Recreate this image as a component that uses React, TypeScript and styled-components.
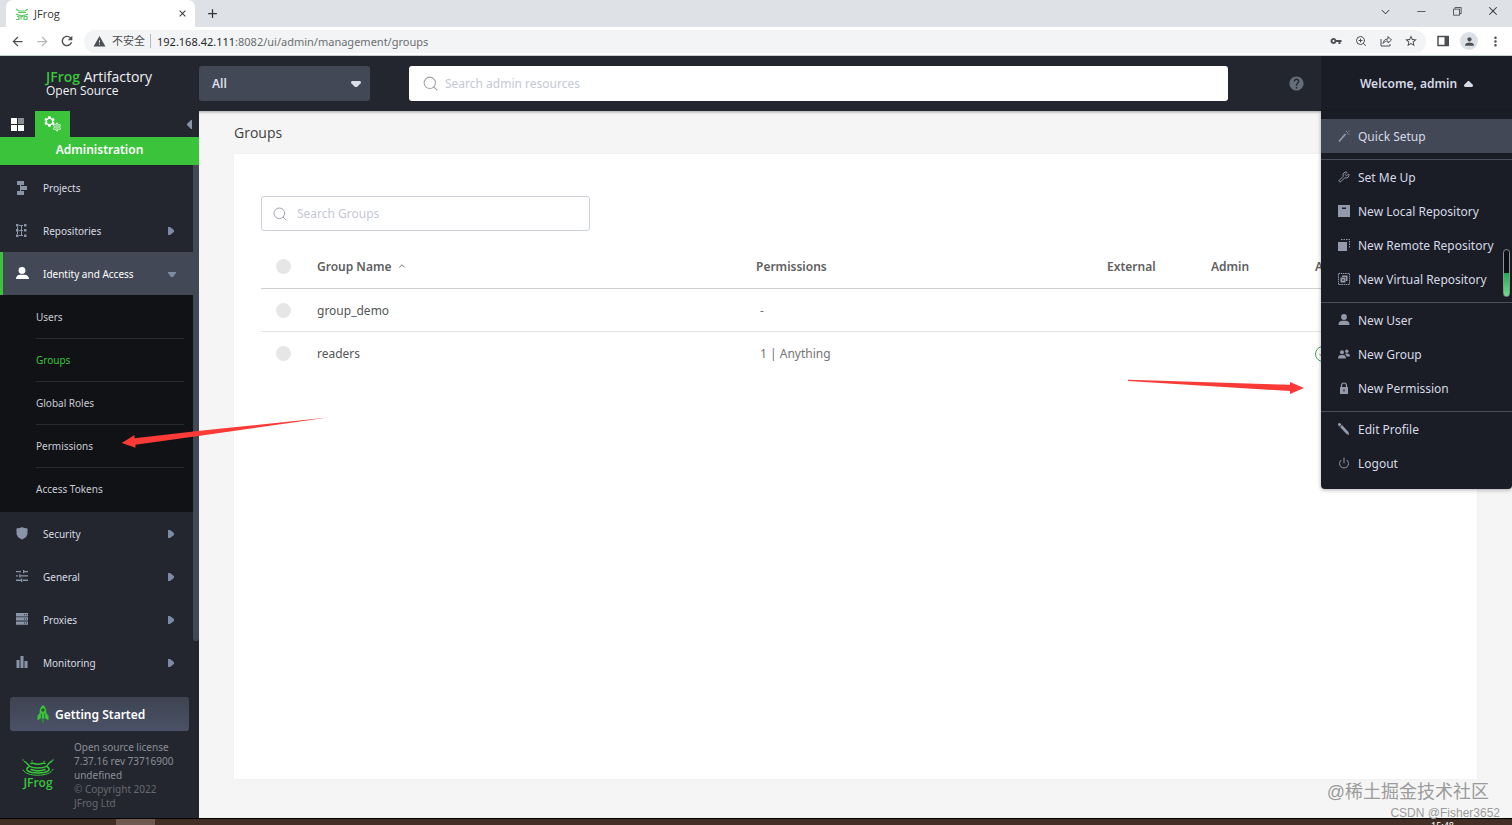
import React from 'react';
import styled, { createGlobalStyle } from 'styled-components';
import {
  MdArrowBack,
  MdArrowForward,
  MdRefresh,
  MdWarning,
  MdVpnKey,
  MdStarBorder,
  MdPerson,
  MdMoreVert,
  MdClose,
  MdAdd,
  MdSettings,
  MdOutlineSettings,
  MdHelp,
} from 'react-icons/md';
import { VscChromeMinimize, VscChromeRestore, VscChromeClose, VscChevronDown } from 'react-icons/vsc';
import { Wrench, Power, Search, ChevronUp, ZoomIn } from 'lucide-react';

const sans = '"Noto Sans", "Open Sans", "Noto Sans CJK SC", sans-serif';
const openSans = '"Open Sans", "Noto Sans", sans-serif';
const green = '#3cc33c';
const slate = '#424855';
const dark = '#23262f';
const darker = '#1a1d26';
const iconTint = '#8a94a8';

const GlobalStyle = createGlobalStyle`
  *, *::before, *::after { box-sizing: border-box; }
  body { margin: 0; font-family: ${sans}; font-size: 12px; color: #4c4c4c; }
  button, input, select { font: inherit; color: inherit; }
  button { border: 0; padding: 0; background: none; cursor: pointer; }
  a { color: inherit; text-decoration: none; }
  ul { list-style: none; margin: 0; padding: 0; }
  svg { display: block; flex: none; }
`;

const Page = styled.div`
  position: relative;
  display: flex;
  flex-direction: column;
  min-height: 100vh;
  overflow: hidden;
`;

/* Browser frame */
const TabStrip = styled.div`
  display: flex;
  align-items: center;
  height: 27px;
  padding-left: 6px;
  background: #dee1e6;
  color: #333;
`;
const Tab = styled.div`
  display: flex;
  align-items: center;
  gap: 6px;
  width: 189px;
  height: 27px;
  padding: 0 5px 0 10px;
  border-radius: 7px 7px 0 0;
  background: #fff;
  font-size: 11px;
`;
const TabTitle = styled.span`
  flex: 1;
  font-family: ${openSans};
`;
const NewTab = styled.button`
  margin-left: 10px;
`;
const WindowControls = styled.div`
  display: flex;
  align-items: center;
  gap: 20px;
  margin-left: auto;
  padding: 0 11px 5px 0;
`;
const Toolbar = styled.div`
  display: flex;
  align-items: center;
  gap: 9px;
  height: 29px;
  padding: 0 9px;
  border-bottom: 1px solid #d5dcdc;
  background: #fff;
  color: #4c5054;
`;
const IconButton = styled.button<{ $faint?: boolean; $round?: boolean }>`
  display: grid;
  place-items: center;
  width: 16px;
  height: 16px;
  color: ${(p) => (p.$faint ? '#b4b7ba' : 'inherit')};
  ${(p) => p.$round && 'width: 18px; height: 18px; border-radius: 50%; background: #dbdfe6;'}
`;
const AddressBar = styled.div`
  display: flex;
  flex: 1;
  align-items: center;
  gap: 6px;
  height: 23px;
  padding: 0 7px 0 9px;
  border-radius: 12px;
  background: #f3f4f5;
  font-size: 11px;
`;
const Insecure = styled.span`
  padding-right: 5px;
  border-right: 1px solid #b6b9bc;
  line-height: 14px;
`;
const Url = styled.span`
  flex: 1;
  color: #6a6e72;
`;
const UrlHost = styled.span`
  color: #26292c;
`;
const AddressTools = styled.div`
  display: flex;
  gap: 9px;
`;

/* Application header */
const Header = styled.header`
  position: relative;
  z-index: 2;
  display: flex;
  align-items: center;
  height: 55px;
  background: ${dark};
  box-shadow: 0 1px 3px rgba(0, 0, 0, 0.35);
`;
const Brand = styled.div`
  width: 199px;
  padding-left: 46px;
  color: #f0f1f4;
  font-family: ${openSans};
  font-size: 12px;
  line-height: 14px;
`;
const BrandName = styled.div`
  font-size: 14px;
`;
const BrandMark = styled.span`
  color: ${green};
  font-weight: 600;
`;
const ScopePicker = styled.label`
  position: relative;
  width: 171px;
  color: #dcdfe8;
`;
const ScopeSelect = styled.select`
  display: block;
  width: 100%;
  height: 35px;
  padding: 0 13px;
  border: 0;
  border-radius: 3px;
  appearance: none;
  background: ${slate};
  font-size: 12px;
  font-weight: 600;
`;
const ScopeArrow = styled.svg`
  position: absolute;
  top: 15px;
  right: 9px;
`;
const SearchField = styled.label<{ $wide?: boolean }>`
  display: flex;
  align-items: center;
  gap: ${(p) => (p.$wide ? '6px' : '9px')};
  height: 35px;
  border-radius: 3px;
  background: #fff;
  color: #a0a3ad;
  ${(p) =>
    p.$wide
      ? 'flex: 1; margin: 0 60px 0 39px; padding: 0 13px;'
      : 'width: 329px; padding: 0 10px; border: 1px solid #ccd0d7;'}
`;
const SearchInput = styled.input`
  flex: 1;
  min-width: 0;
  padding: 0;
  border: 0;
  outline: 0;
  background: none;
  font-size: 12px;
  color: #4c4c4c;
  &::placeholder { color: #c5c8d4; opacity: 1; }
`;
const HelpButton = styled.button`
  margin-right: 16px;
  color: #666e7b;
`;

/* User menu */
const UserArea = styled.div`
  position: relative;
  width: 191px;
  height: 55px;
  background: ${darker};
  color: #d6d9e6;
`;
const UserButton = styled.button`
  display: flex;
  align-items: center;
  justify-content: center;
  gap: 7px;
  width: 100%;
  height: 55px;
  font-size: 12px;
  font-weight: 600;
`;
const UserMenu = styled.div`
  position: absolute;
  top: 100%;
  right: 0;
  width: 100%;
  padding: 8px 0 3px;
  border-radius: 0 0 4px 4px;
  background: ${darker};
  box-shadow: 0 1px 4px rgba(0, 0, 0, 0.3);
`;
const MenuGroup = styled.ul`
  padding-bottom: 6px;
  & + & { border-top: 1px solid #4a4f5a; }
`;
const MenuLink = styled.a<{ $active?: boolean }>`
  display: flex;
  align-items: center;
  gap: 8px;
  height: 34px;
  padding-left: 17px;
  background: ${(p) => (p.$active ? slate : 'transparent')};
  font-size: 12px;
  white-space: nowrap;
  svg { color: #9299aa; }
`;
const LevelGauge = styled.div`
  position: absolute;
  top: 138px;
  right: 2px;
  width: 7px;
  height: 48px;
  border: 1px solid #8b9098;
  border-radius: 4px;
  background: linear-gradient(#0c0e12 50%, #23a84e 50%, #6ede8b);
`;

/* Sidebar */
const Body = styled.div`
  display: flex;
  flex: 1;
`;
const Sidebar = styled.aside`
  display: flex;
  flex-direction: column;
  width: 199px;
  background: ${dark};
  color: #d8dbe3;
`;
const ModeTabs = styled.div`
  display: flex;
  align-items: center;
  position: relative;
  z-index: 3;
  height: 26px;
  background: ${dark};
`;
const ModeTab = styled.button<{ $active?: boolean }>`
  display: grid;
  place-items: center;
  width: 35px;
  height: 26px;
  background: ${(p) => (p.$active ? green : 'transparent')};
`;
const Collapse = styled.button`
  margin-left: auto;
  padding-right: 6px;
`;
const ModeTitle = styled.h2`
  margin: 0;
  height: 28px;
  background: ${green};
  color: #fff;
  font-size: 12px;
  font-weight: 600;
  line-height: 25px;
  text-align: center;
`;
const NavArea = styled.nav`
  display: flex;
  flex: 1;
`;
const NavList = styled.ul`
  flex: 1;
  padding-top: 1px;
`;
const ScrollTrack = styled.div`
  width: 6px;
`;
const ScrollThumb = styled.div`
  height: 476px;
  border-radius: 0 0 3px 3px;
  background: ${slate};
`;
const NavLink = styled.a<{ $active?: boolean }>`
  display: grid;
  grid-template-columns: 27px 1fr 8px;
  align-items: center;
  height: 43px;
  padding: 0 17px 0 16px;
  font-size: 10px;
  ${(p) =>
    p.$active &&
    `padding-left: 13px; border-left: 3px solid ${green}; background: ${slate}; color: #fff;`}
`;
const SubNav = styled.ul`
  padding: 1px 9px 1px 36px;
  background: #111216;
`;
const SubLink = styled.a<{ $active?: boolean }>`
  display: flex;
  align-items: center;
  height: 43px;
  border-bottom: 1px solid #2a2b2e;
  color: ${(p) => (p.$active ? green : '#c9ccd4')};
  font-size: 10px;
  li:last-child > & { border-color: transparent; }
`;
const GettingStarted = styled.button`
  display: flex;
  align-items: center;
  gap: 5px;
  height: 34px;
  margin: 0 10px 9px;
  padding-left: 26px;
  border-radius: 3px;
  background: linear-gradient(#3d4350, #4b5267);
  color: #fff;
  font-size: 12px;
  font-weight: 600;
`;
const License = styled.footer`
  display: flex;
  gap: 20px;
  padding: 0 0 8px 22px;
  color: #8b8e96;
  font-size: 10px;
  line-height: 14px;
`;
const Logo = styled.div`
  width: 32px;
  padding-top: 19px;
  color: ${green};
  font-family: ${openSans};
  font-size: 12px;
  font-weight: 600;
  line-height: 14px;
  text-align: center;
`;
const Copyright = styled.div`
  color: #666970;
`;

/* Content */
const Content = styled.main`
  display: flex;
  flex: 1;
  flex-direction: column;
  padding: 10px 35px 39px;
  background: #f5f5f5;
`;
const Title = styled.h1`
  margin: 0 0 9px;
  color: #414141;
  font-family: ${openSans};
  font-size: 14px;
  font-weight: 400;
  line-height: 24px;
`;
const Card = styled.section`
  flex: 1;
  padding: 42px 27px 27px;
  background: #fff;
  box-shadow: 0 0 4px rgba(0, 0, 0, 0.03);
`;
const Table = styled.table`
  width: 100%;
  margin-top: 14px;
  border-collapse: collapse;
  table-layout: fixed;
  font-size: 12px;
  text-align: left;
`;
const Col = styled.col<{ $w?: number }>`
  width: ${(p) => (p.$w ? `${p.$w}px` : 'auto')};
`;
const Row = styled.tr`
  height: 43px;
  border-bottom: 1px solid #e2e2e2;
  thead & { border-color: #cfcfcf; }
  &:last-child:not(thead &) { border-color: transparent; }
`;
const Th = styled.th`
  padding: 0;
  color: #606060;
  font-weight: 600;
`;
const Td = styled.td<{ $inset?: boolean }>`
  padding: 2px 0 0 ${(p) => (p.$inset ? '4px' : '0')};
  color: ${(p) => (p.$inset ? '#747474' : '#555')};
`;
const SortButton = styled.button`
  display: flex;
  align-items: center;
  gap: 6px;
`;
const Check = styled.input`
  display: block;
  width: 15px;
  height: 15px;
  margin: 0 0 0 15px;
  border-radius: 50%;
  appearance: none;
  background: #e6e6e6;
`;

/* Overlays */
const Arrows = styled.svg`
  position: absolute;
  top: 370px;
  left: 0;
  z-index: 4;
  pointer-events: none;
`;
const Watermark = styled.div`
  position: absolute;
  right: 12px;
  bottom: 4px;
  z-index: 3;
  display: flex;
  flex-direction: column;
  align-items: flex-end;
  color: #9b9b9b;
  font-family: "Liberation Sans", "Noto Sans CJK SC", sans-serif;
  font-size: 12px;
  line-height: 16px;
`;
const WatermarkTitle = styled.div`
  margin-right: 11px;
  font-size: 18px;
  line-height: 26px;
`;
const Taskbar = styled.div`
  position: relative;
  z-index: 3;
  display: flex;
  justify-content: space-between;
  height: 7px;
  padding: 0 58px 0 116px;
  border-top: 1px solid #000;
  background: #432e26;
  overflow: hidden;
`;
const TaskItem = styled.div`
  width: 39px;
  background: #705950;
`;
const Clock = styled.div`
  padding-top: 1px;
  color: #fff;
  font-size: 9px;
  line-height: 12px;
`;

const glyphs: Record<string, React.ReactNode> = {
  projects: <path d="M1 0h7v4H1zM4 5h7v4H4zM1 10h7v4H1zM4 4h1v1H4zM4 9h1v1H4z" />,
  repositories: (
    <path d="M0 0h2.500v2.500H0zM0 5h2.500v2.500H0zM0 10.500h2.500V13H0zM1 3h1v7H1zM3 1h4v1H3zM3 6h4v1H3zM3 11h4v1H3zM8 0h2.500v2.500H8zM8 5h2.500v2.500H8zM8 10.500h2.500V13H8zM5 1h1v11H5z" />
  ),
  identity: <path d="M6 0a3.3 3.3 0 1 1 0 6.8A3.3 3.3 0 0 1 6 0zM0 12c0-3 2-4.300 4-4.300h4.500c2.500 0 4.500 1.600 4.500 4.300z" />,
  security: <path d="M6 0c2 1 4 1.400 5.500 1.400V6c0 3-2 5.200-5.500 6.500C2.500 11.200.5 9 .5 6V1.400C2 1.400 4 1 6 0z" />,
  general: (
    <path d="M0 1h5v1.300H0zM7 1h5v1.300H7zM7 0h1.300v3.300H7zM0 5.300h2v1.300H0zM4.500 5.300H12v1.300H4.500zM3.200 4.300h1.300v3.300H3.200zM0 9.600h5v1.300H0zM7 9.600h5v1.300H7zM5 8.600h1.300v3.300H5z" />
  ),
  proxies: (
    <path fillRule="evenodd" d="M0 0h12v3.400H0zM0 4.200h12v3.400H0zM0 8.400h12v3.400H0zM8 1.200h1v1H8zM10 1.200h1v1h-1zM8 5.400h1v1H8zM10 5.400h1v1h-1zM8 9.600h1v1H8zM10 9.600h1v1h-1z" />
  ),
  monitoring: <path d="M.5 4H3.500v8H.5zM4.500 0H7.500v12H4.500zM8.500 5h3v7h-3z" />,
};

const NavGlyph = ({ name, active }: { name: string; active?: boolean }) => (
  <svg width="13" height="14" viewBox="0 0 13 14" fill={active ? '#fff' : iconTint} aria-hidden="true">
    {glyphs[name]}
  </svg>
);

const FrogSplash = () => (
  <svg width="32" height="17" viewBox="0 0 32 17" fill="none" stroke={green} strokeLinecap="round" aria-hidden="true">
    <path d="M6.500 8c-4 2.500-1 6 9.500 6s13.500-3.500 9.500-6" strokeWidth="1.600" />
    <path d="M1 11c2 3.500 8 5.200 14 5.200 9 0 14-2 16-6" strokeWidth="1" />
    <path d="M2.500 2.500C5 3.800 6 5.500 7.500 7.300c4 2.300 13 2.300 17 0C26 5.500 27 3.500 30 2" strokeWidth="1.400" />
    <path d="M9 4.500c2-1.200 3 .8 7 .8s5-1.800 7-.8M9 10.500c4 1.600 10 1.600 14 0" strokeWidth="1.600" />
    <path d="M1 1h.1M31 1h.1M10 2h.1M22 2.500h.1" strokeWidth="1.400" />
  </svg>
);

const Rocket = () => (
  <svg width="14" height="20" viewBox="0 0 14 20" aria-hidden="true">
    <path d="M7 1c2.800 2.200 3.600 5 3.300 8l2.200 3v4.500l-2.700-2H4.200l-2.700 2V12l2.200-3C3.400 6 4.200 3.200 7 1z" fill={green} />
    <circle cx="7" cy="6" r="1.700" fill="#1f5a2c" />
    <path d="M5.300 9.500v5M8.700 9.500v5" stroke="#2b5a3c" strokeWidth=".8" />
    <path d="M5.500 15.300h3L7 19.500z" fill="#2f8f3a" />
  </svg>
);

const Favicon = () => (
  <svg width="12" height="12" viewBox="0 0 12 12" fill="none" stroke="#5fc968" strokeWidth="1.200" aria-hidden="true">
    <path d="M0 1l3 2h6l3-2M2 4.500h8M0 6c3 2 9 2 12 0M1 8.500h2v3H0M5 11.500v-3h2M8 8.500h3v3H8z" />
  </svg>
);

const svgBox = { width: 12, height: 12, viewBox: '0 0 12 12', 'aria-hidden': true } as const;

const Wand = () => (
  <svg {...svgBox} fill="none" stroke="currentColor">
    <path d="M1 11.500L7.500 4" strokeWidth="1.800" />
    <path d="M8 1.500h1M10.500 1h1M10.500 4h1M9 3h1" strokeWidth="1" />
  </svg>
);
const LocalRepo = () => (
  <svg {...svgBox} fill="currentColor">
    <path fillRule="evenodd" d="M0 0h12v12H0zM4 2.500h4V4H4z" />
  </svg>
);
const RemoteRepo = () => (
  <svg {...svgBox} fill="currentColor">
    <path d="M0 3h9v9H0z" />
    <path d="M3 .5h8.500V9" fill="none" stroke="currentColor" strokeDasharray="1.500 1" />
  </svg>
);
const VirtualRepo = () => (
  <svg {...svgBox} fill="currentColor">
    <path d="M.5.5h11v11H.5z" fill="none" stroke="currentColor" strokeDasharray="1.500 .7" />
    <path fillRule="evenodd" d="M2.500 4.500h5v5h-5zM4.300 6.300h1.400v1.400H4.300z" />
    <path d="M4 4V2.500h5.500V8H8V4z" />
  </svg>
);
const UserGlyph = () => (
  <svg {...svgBox} fill="currentColor">
    <circle cx="6" cy="3" r="2.900" />
    <path d="M.5 11c0-3 1.500-4.300 3.500-4.300h4c2 0 3.500 1.300 3.500 4.300z" />
  </svg>
);
const GroupGlyph = () => (
  <svg {...svgBox} fill="currentColor">
    <circle cx="4" cy="4.300" r="2" />
    <circle cx="8.800" cy="3.200" r="1.700" />
    <path d="M0 10.500c0-2.600 1.400-3.600 3-3.600h2c1.600 0 3 1 3 3.600zM7 6c.6-.4 1-.5 2-.5 2 0 3 .8 3 3H8.600C8.300 7.300 7.800 6.500 7 6z" />
  </svg>
);
const LockGlyph = () => (
  <svg {...svgBox} fill="currentColor">
    <path d="M3.500 5V3.500a2.500 2.500 0 0 1 5 0V5" fill="none" stroke="currentColor" strokeWidth="1.200" />
    <path fillRule="evenodd" d="M2 5h8v7H2zM5.400 7.500v2h1.200v-2z" />
  </svg>
);
const PencilGlyph = () => (
  <svg {...svgBox} fill="currentColor">
    <path d="M0 .5L2 0l1.500 1.500L1.500 3.500 0 2zM2 4l2-2 6.500 7 .5 3-2.500-1z" />
  </svg>
);
const ShareGlyph = () => (
  <svg {...svgBox} fill="none" stroke="currentColor">
    <path d="M1 4v7h9V9M3 8.500C3.500 5.500 5 4 8 4V1.500L11.500 5 8 8V6C6 6 4.500 6.500 3 8.500z" />
  </svg>
);

const menuGroups = [
  [{ label: 'Quick Setup', icon: <Wand />, active: true }],
  [
    { label: 'Set Me Up', icon: <Wrench size={12} /> },
    { label: 'New Local Repository', icon: <LocalRepo /> },
    { label: 'New Remote Repository', icon: <RemoteRepo /> },
    { label: 'New Virtual Repository', icon: <VirtualRepo /> },
  ],
  [
    { label: 'New User', icon: <UserGlyph /> },
    { label: 'New Group', icon: <GroupGlyph /> },
    { label: 'New Permission', icon: <LockGlyph /> },
  ],
  [
    { label: 'Edit Profile', icon: <PencilGlyph /> },
    { label: 'Logout', icon: <Power size={12} /> },
  ],
];

const navItems = [
  { label: 'Projects', icon: 'projects', leaf: true },
  { label: 'Repositories', icon: 'repositories' },
  {
    label: 'Identity and Access',
    icon: 'identity',
    children: ['Users', 'Groups', 'Global Roles', 'Permissions', 'Access Tokens'],
  },
  { label: 'Security', icon: 'security' },
  { label: 'General', icon: 'general' },
  { label: 'Proxies', icon: 'proxies' },
  { label: 'Monitoring', icon: 'monitoring' },
];

const groups = [
  { name: 'group_demo', permissions: '-', auto: false },
  { name: 'readers', permissions: '1 | Anything', auto: true },
];

const BrowserFrame = () => (
  <>
    <TabStrip>
      <Tab>
        <Favicon />
        <TabTitle>JFrog</TabTitle>
        <IconButton aria-label="Close tab"><MdClose size={11} /></IconButton>
      </Tab>
      <NewTab aria-label="New tab"><MdAdd size={15} /></NewTab>
      <WindowControls>
        <IconButton aria-label="Tabs"><VscChevronDown size={13} /></IconButton>
        <IconButton aria-label="Minimize"><VscChromeMinimize size={12} /></IconButton>
        <IconButton aria-label="Restore"><VscChromeRestore size={12} /></IconButton>
        <IconButton aria-label="Close window"><VscChromeClose size={12} /></IconButton>
      </WindowControls>
    </TabStrip>
    <Toolbar>
      <IconButton aria-label="Back"><MdArrowBack size={15} /></IconButton>
      <IconButton aria-label="Forward" $faint><MdArrowForward size={15} /></IconButton>
      <IconButton aria-label="Reload"><MdRefresh size={16} /></IconButton>
      <AddressBar>
        <MdWarning size={13} />
        <Insecure>不安全</Insecure>
        <Url><UrlHost>192.168.42.111</UrlHost>:8082/ui/admin/management/groups</Url>
        <AddressTools>
          <IconButton aria-label="Passwords"><MdVpnKey size={12} /></IconButton>
          <IconButton aria-label="Zoom"><ZoomIn size={12} /></IconButton>
          <IconButton aria-label="Share"><ShareGlyph /></IconButton>
          <IconButton aria-label="Bookmark"><MdStarBorder size={14} /></IconButton>
        </AddressTools>
      </AddressBar>
      <IconButton aria-label="Side panel">
        <svg {...svgBox}>
          <path d="M1 1.500h10v9H1z" fill="none" stroke="currentColor" strokeWidth="1.500" />
          <path d="M7.500 1H12v10H7.500z" fill="currentColor" />
        </svg>
      </IconButton>
      <IconButton aria-label="Profile" $round><MdPerson size={13} /></IconButton>
      <IconButton aria-label="More"><MdMoreVert size={15} /></IconButton>
    </Toolbar>
  </>
);

const AppHeader = () => (
  <Header>
    <Brand>
      <BrandName><BrandMark>JFrog</BrandMark> Artifactory</BrandName>
      Open Source
    </Brand>
    <ScopePicker>
      <ScopeSelect aria-label="Search scope" defaultValue="All">
        <option>All</option>
      </ScopeSelect>
      <ScopeArrow width="10" height="6" viewBox="0 0 10 6" fill="currentColor" aria-hidden="true">
        <path d="M1 0h8l1 1v1L6 6H4L0 2V1z" />
      </ScopeArrow>
    </ScopePicker>
    <SearchField $wide>
      <Search size={17} strokeWidth={1.5} />
      <SearchInput aria-label="Search admin resources" placeholder="Search admin resources" />
    </SearchField>
    <HelpButton aria-label="Help"><MdHelp size={17} /></HelpButton>
    <UserArea>
      <UserButton>
        Welcome, admin
        <svg width="9" height="6" viewBox="0 0 9 6" fill="currentColor" aria-hidden="true">
          <path d="M1 6h7l1-1V4L5 0H4L0 4v1z" />
        </svg>
      </UserButton>
      <UserMenu>
        {menuGroups.map((group) => (
          <MenuGroup key={group[0].label}>
            {group.map((item) => (
              <li key={item.label}>
                <MenuLink href="#" $active={'active' in item}>
                  {item.icon}
                  {item.label}
                </MenuLink>
              </li>
            ))}
          </MenuGroup>
        ))}
        <LevelGauge />
      </UserMenu>
    </UserArea>
  </Header>
);

const SideNavigation = () => (
  <Sidebar>
    <ModeTabs>
      <ModeTab aria-label="Application">
        <svg width="13" height="13" viewBox="0 0 13 13" fill="#fff" aria-hidden="true">
          <path d="M0 0h6v6H0zM0 7h6v6H0zM7 7h6v6H7z" />
          <path d="M7 0h6v6H7z" fill="#8a8d93" />
        </svg>
      </ModeTab>
      <ModeTab aria-label="Administration" $active>
        <svg width="20" height="18" viewBox="0 0 20 18" color="#fff" aria-hidden="true">
          <MdSettings size={13} />
          <circle cx="6.500" cy="6.500" r="2.500" fill={green} />
          <MdOutlineSettings x={9} y={7} size={10} opacity={0.8} />
        </svg>
      </ModeTab>
      <Collapse aria-label="Collapse sidebar">
        <svg width="6" height="9" viewBox="0 0 6 9" fill={iconTint} aria-hidden="true">
          <path d="M5 0v9H4L0 5V4l4-4z" />
        </svg>
      </Collapse>
    </ModeTabs>
    <ModeTitle>Administration</ModeTitle>
    <NavArea>
      <NavList>
        {navItems.map((item) => (
          <li key={item.label}>
            <NavLink href="#" $active={!!item.children}>
              <NavGlyph name={item.icon} active={!!item.children} />
              <span>{item.label}</span>
              {!item.leaf && (
                <svg width="8" height="10" viewBox="0 0 8 10" fill="#7c8aa3" aria-hidden="true">
                  <path d={item.children ? 'M0 3h8v1L5 8H3L0 4z' : 'M0 1h2l4 3v2L2 9H0z'} />
                </svg>
              )}
            </NavLink>
            {item.children && (
              <SubNav>
                {item.children.map((child) => (
                  <li key={child}>
                    <SubLink href="#" $active={child === 'Groups'}>{child}</SubLink>
                  </li>
                ))}
              </SubNav>
            )}
          </li>
        ))}
      </NavList>
      <ScrollTrack><ScrollThumb /></ScrollTrack>
    </NavArea>
    <GettingStarted><Rocket /> Getting Started</GettingStarted>
    <License>
      <Logo>
        <FrogSplash />
        JFrog
      </Logo>
      <div>
        Open source license<br />7.37.16 rev 73716900<br />undefined
        <Copyright>© Copyright 2022<br />JFrog Ltd</Copyright>
      </div>
    </License>
  </Sidebar>
);

const GroupsPage = () => (
  <Content>
    <Title>Groups</Title>
    <Card>
      <SearchField>
        <Search size={16} strokeWidth={1.5} />
        <SearchInput aria-label="Search Groups" placeholder="Search Groups" />
      </SearchField>
      <Table>
        <colgroup>
          <Col $w={56} />
          <Col />
          <Col $w={351} />
          <Col $w={104} />
          <Col $w={104} />
          <Col $w={135} />
        </colgroup>
        <thead>
          <Row>
            <Th><Check type="checkbox" aria-label="Select all groups" /></Th>
            <Th><SortButton>Group Name <ChevronUp size={10} strokeWidth={2} /></SortButton></Th>
            <Th>Permissions</Th>
            <Th>External</Th>
            <Th>Admin</Th>
            <Th>Auto Join</Th>
          </Row>
        </thead>
        <tbody>
          {groups.map((g) => (
            <Row key={g.name}>
              <Td><Check type="checkbox" aria-label={`Select ${g.name}`} /></Td>
              <Td>{g.name}</Td>
              <Td $inset>{g.permissions}</Td>
              <Td />
              <Td />
              <Td>
                {g.auto && (
                  <svg width="16" height="16" viewBox="0 0 16 16" fill="none" stroke="#4ba156" role="img" aria-label="Yes">
                    <circle cx="8" cy="8" r="7.500" />
                    <path d="M4.500 8l2.500 2.500L11.500 6" />
                  </svg>
                )}
              </Td>
            </Row>
          ))}
        </tbody>
      </Table>
    </Card>
  </Content>
);

export default function App() {
  return (
    <Page>
      <GlobalStyle />
      <BrowserFrame />
      <AppHeader />
      <Body>
        <SideNavigation />
        <GroupsPage />
      </Body>
      <Taskbar>
        <TaskItem />
        <Clock>15:48</Clock>
      </Taskbar>
      <Arrows width="1310" height="90" viewBox="0 370 1310 90" fill="#f93a37" aria-hidden="true">
        <path d="M328 417.500L200 430.700 134.500 438.300V435L121.700 443l13.800 4.700V444.700L200 435.700z" />
        <path d="M1128 379.800L1290 384.800V382L1304 388l-14 6v-3L1128 381z" />
      </Arrows>
      <Watermark>
        <WatermarkTitle>@稀土掘金技术社区</WatermarkTitle>
        CSDN @Fisher3652
      </Watermark>
    </Page>
  );
}
